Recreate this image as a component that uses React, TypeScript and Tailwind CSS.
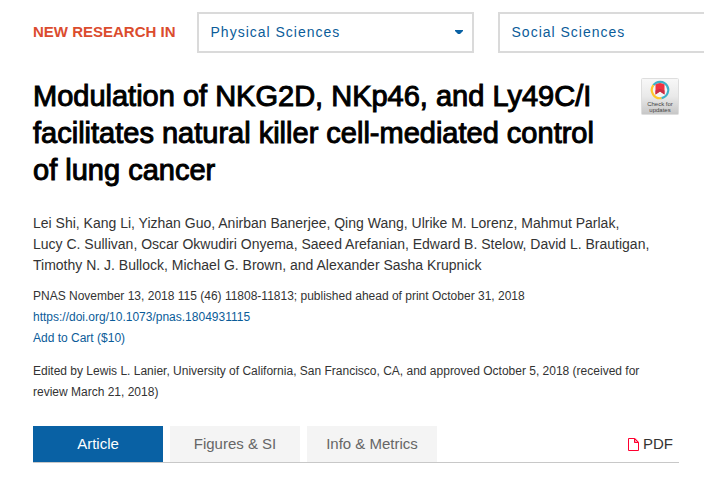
import React from "react";

const authors = [
  "Lei Shi",
  "Kang Li",
  "Yizhan Guo",
  "Anirban Banerjee",
  "Qing Wang",
  "Ulrike M. Lorenz",
  "Mahmut Parlak",
  "Lucy C. Sullivan",
  "Oscar Okwudiri Onyema",
  "Saeed Arefanian",
  "Edward B. Stelow",
  "David L. Brautigan",
  "Timothy N. J. Bullock",
  "Michael G. Brown",
  "Alexander Sasha Krupnick",
];

function TopicSelect({ topic }: { topic: string }) {
  return (
    <div className="relative w-[277px] shrink-0">
      <select
        aria-label={topic}
        className="block h-[41px] w-full appearance-none rounded-none border-2 border-[#dadada] bg-white px-3 pb-px text-sm tracking-[1px] text-[#0b5c99]"
      >
        <option>{topic}</option>
      </select>
      <svg
        viewBox="0 0 8 4"
        className="pointer-events-none absolute top-[18px] right-[11px] h-1 w-2 fill-[#0961a4]"
        aria-hidden="true"
      >
        <path d="M0 0h8v1L5 4H3L0 1z" />
      </svg>
    </div>
  );
}

function CheckUpdates() {
  return (
    <button type="button" aria-label="Check for updates" className="h-[38px] w-[38px] shrink-0">
      <svg viewBox="0 0 38 38" className="block h-full w-full">
        <defs>
          <linearGradient id="badge" x1="0" y1="0" x2="0" y2="1">
            <stop offset="0" stopColor="#f8f8f8" />
            <stop offset="0.5" stopColor="#e9e9e9" />
            <stop offset="1" stopColor="#c6c6c6" />
          </linearGradient>
        </defs>
        <rect x="0.5" y="0.5" width="37" height="36" rx="1" fill="url(#badge)" stroke="#dedede" />
        <circle cx="19" cy="12" r="8" fill="#f5f5f5" />
        <path d="M12.4 7.2A8.2 8.2 0 1 1 20.4 20.1" fill="none" stroke="#3eb1c8" strokeWidth="2.2" />
        <path d="M12.4 7.2A8.2 8.2 0 0 0 20.4 20.1" fill="none" stroke="#ffc72c" strokeWidth="2.2" />
        <path d="M14.5 6.5q4.500-3 9 0v10l-4.500-3-4.500 3z" fill="#ef3340" />
        <path d="M14.5 12.500v4l4.500-3 4.500 3v-4l-4.500-1.500z" fill="#c92c42" />
        <text x="19" y="28" textAnchor="middle" fontSize="6" fill="#444">
          Check for
        </text>
        <text x="19" y="34" textAnchor="middle" fontSize="6" fill="#444">
          updates
        </text>
      </svg>
    </button>
  );
}

export default function App() {
  return (
    <div className="overflow-hidden bg-white pt-3 pb-6 font-['Liberation_Sans',Arial,sans-serif] text-[#333]">
      <header className="flex items-center pl-[33px]">
        <h2 className="mr-[21px] shrink-0 text-[15px] font-bold text-[#db4c2e]">NEW RESEARCH IN</h2>
        <div className="flex gap-6">
          <TopicSelect topic="Physical Sciences" />
          <TopicSelect topic="Social Sciences" />
        </div>
      </header>

      <main className="pr-[25px] pl-[33px]">
        <div className="mt-[25px] flex items-start justify-between">
          <h1 className="max-w-[580px] text-[29px] leading-[37px] text-black [-webkit-text-stroke:1px_black]">
            Modulation of NKG2D, NKp46, and Ly49C/I facilitates natural killer cell-mediated control of lung cancer
          </h1>
          <CheckUpdates />
        </div>

        <p className="mt-6 text-sm leading-[21px]">
          {authors.map((name, i) => (
            <React.Fragment key={name}>
              {i === authors.length - 1 && "and "}
              <span className="whitespace-nowrap">
                {name}
                {i < authors.length - 1 && ","}
              </span>{" "}
            </React.Fragment>
          ))}
        </p>

        <div className="mt-[10px] text-xs leading-[21px]">
          <p>PNAS November 13, 2018 115 (46) 11808-11813; published ahead of print October 31, 2018</p>
          <p>
            <a href="https://doi.org/10.1073/pnas.1804931115" className="text-[#0b5c99]">
              https://doi.org/10.1073/pnas.1804931115
            </a>
          </p>
          <p>
            <a href="#cart" className="text-[#0b5c99]">
              Add to Cart ($10)
            </a>
          </p>
        </div>

        <p className="mt-3 max-w-[632px] text-xs leading-[21px]">
          Edited by Lewis L. Lanier, University of California, San Francisco, CA, and approved October 5, 2018 (received
          for review March 21, 2018)
        </p>

        <nav className="mt-[23px] flex border-b border-[#c8c8c8] text-[15px]">
          <div className="flex gap-[7px]">
            <a href="#article" className="flex h-9 w-[130px] items-center justify-center bg-[#0961a4] text-white">
              Article
            </a>
            <a href="#figures" className="flex h-9 w-[130px] items-center justify-center bg-[#f4f4f4] text-[#666]">
              Figures &amp; SI
            </a>
            <a href="#info" className="flex h-9 w-[130px] items-center justify-center bg-[#f4f4f4] text-[#666]">
              Info &amp; Metrics
            </a>
          </div>
          <a href="#pdf" className="mr-[6px] ml-auto flex items-center gap-1">
            <svg viewBox="0 0 11 13" className="h-[13px] w-[11px]" fill="none" stroke="#ff0030" aria-hidden="true">
              <path d="M0.5 0.5h6l4 4v8h-10zM6.500 0.5v4h4" />
              <path d="M6 0h1.500L11 3.500V5H6z" fill="#ff0030" fillOpacity="0.4" stroke="none" />
            </svg>
            PDF
          </a>
        </nav>
      </main>
    </div>
  );
}
